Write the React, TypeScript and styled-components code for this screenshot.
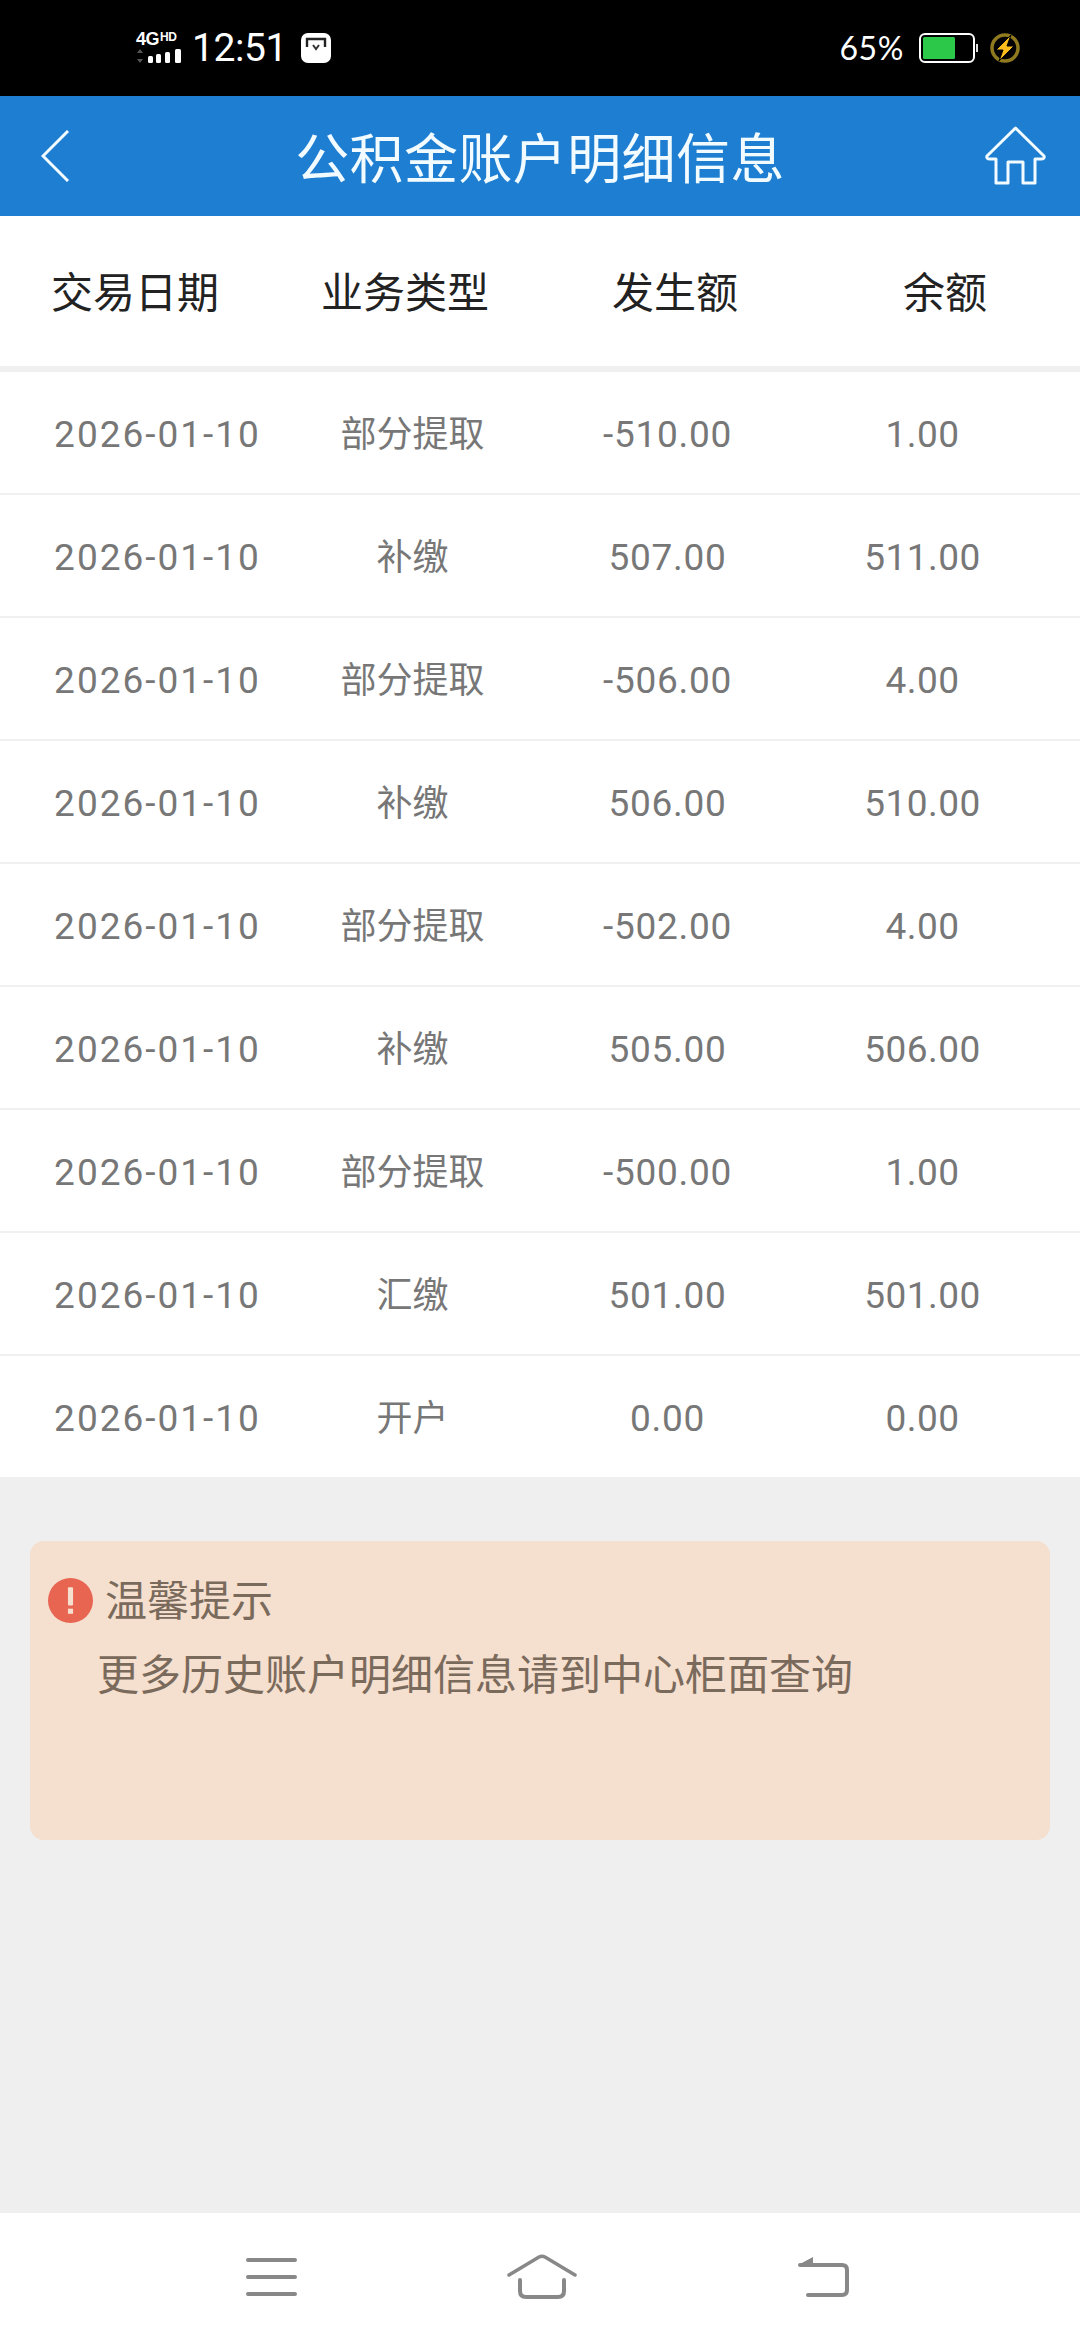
import React from 'react';
import styled, { createGlobalStyle } from 'styled-components';

const GlobalStyle = createGlobalStyle`
  html, body {
    margin: 0;
    padding: 0;
    background: #efefef;
  }
  * {
    box-sizing: border-box;
  }
`;

const Page = styled.div`
  width: 1080px;
  height: 2340px;
  display: flex;
  flex-direction: column;
  font-family: Roboto, "Noto Sans CJK SC", sans-serif;
  overflow: hidden;
`;

const StatusBar = styled.div`
  height: 96px;
  flex: none;
  background: #000;
  color: #fff;
  display: flex;
  align-items: center;
  justify-content: space-between;
  padding: 0 60px 0 136px;
`;

const StatusGroup = styled.div`
  display: flex;
  align-items: center;
`;

const SignalBox = styled.div`
  width: 46px;
  height: 32px;
  display: flex;
  flex-direction: column;
  justify-content: space-between;
  margin-right: 10px;
`;

const NetworkLabel = styled.div`
  display: flex;
  align-items: flex-start;
  height: 14px;
  font-family: "Liberation Sans", sans-serif;
  font-weight: 700;
  font-size: 18px;
  line-height: 14px;
  letter-spacing: -0.5px;
`;

const NetworkSup = styled.span`
  font-size: 12px;
  line-height: 10px;
  margin-left: 1px;
`;

const Clock = styled.span`
  font-size: 39px;
  line-height: 40px;
  letter-spacing: -0.4px;
  margin-right: 14px;
`;

const Percent = styled.span`
  font-size: 32px;
  line-height: 36px;
  letter-spacing: 0.6px;
  margin-right: 15px;
  font-family: Lato, sans-serif;
`;

const NavBar = styled.header`
  height: 120px;
  flex: none;
  background: #1e7fd2;
  color: #f2fbff;
  display: grid;
  grid-template-columns: 1fr auto 1fr;
  align-items: center;
  padding: 0 34px;
`;

const NavTitle = styled.h1`
  margin: 0;
  font-family: "Noto Sans CJK SC", sans-serif;
  font-size: 54px;
  line-height: 70px;
  font-weight: 400;
  letter-spacing: 0.4px;
`;

const NavSlot = styled.div<{ $end?: boolean }>`
  display: flex;
  justify-content: ${(p) => (p.$end ? 'flex-end' : 'flex-start')};
  padding-left: ${(p) => (p.$end ? '0' : '7px')};
`;

const Main = styled.main`
  flex: 1;
  background: #efefef;
`;

const TableHead = styled.div`
  height: 156px;
  background: #fff;
  border-bottom: 6px solid #f0f0f0;
  display: grid;
  grid-template-columns: repeat(4, 270px);
  align-items: center;
  padding-bottom: 2px;
`;

const HeadCell = styled.div`
  text-align: center;
  font-family: "Noto Sans CJK SC", sans-serif;
  font-size: 42px;
  line-height: 50px;
  color: #222;
`;

const Row = styled.div`
  height: 123px;
  background: #fff;
  border-bottom: 2px solid #f0f0f0;
  padding: 4px 30px 0;
  display: grid;
  grid-template-columns: repeat(4, 255px);
  align-items: center;
  &:last-child {
    border-bottom: none;
    height: 120px;
  }
`;

const Cell = styled.div<{ $spacing: number; $size: number }>`
  text-align: center;
  font-size: ${(p) => p.$size}px;
  line-height: 44px;
  letter-spacing: ${(p) => p.$spacing}px;
  color: #777;
  font-weight: 400;
`;

const Notice = styled.section`
  margin: 62px 30px 0;
  height: 299px;
  padding: 34px 18px 0;
  border-radius: 14px;
  background: #f5dfce;
  color: #7a6a5c;
  font-family: "Noto Sans CJK SC", sans-serif;
`;

const NoticeHead = styled.div`
  display: flex;
  align-items: center;
  gap: 12px;
  height: 50px;
`;

const NoticeTitle = styled.span`
  font-size: 42px;
  line-height: 50px;
  margin-bottom: 4px;
`;

const NoticeText = styled.p`
  margin: 22px 0 0 49px;
  font-size: 42px;
  line-height: 50px;
`;

const BottomBar = styled.nav`
  height: 127px;
  flex: none;
  background: #fff;
  display: grid;
  grid-template-columns: 246px 51px 210px 70px 221px 52px;
  align-items: center;
`;

const Icon = styled.svg`
  display: block;
`;

const NavIconSlot = styled.div<{ $col: number }>`
  grid-column: ${(p) => p.$col};
  display: flex;
  justify-content: center;
`;

type Record = { date: string; kind: string; amount: string; balance: string };

const records: Record[] = [
  { date: '2026-01-10', kind: '部分提取', amount: '-510.00', balance: '1.00' },
  { date: '2026-01-10', kind: '补缴', amount: '507.00', balance: '511.00' },
  { date: '2026-01-10', kind: '部分提取', amount: '-506.00', balance: '4.00' },
  { date: '2026-01-10', kind: '补缴', amount: '506.00', balance: '510.00' },
  { date: '2026-01-10', kind: '部分提取', amount: '-502.00', balance: '4.00' },
  { date: '2026-01-10', kind: '补缴', amount: '505.00', balance: '506.00' },
  { date: '2026-01-10', kind: '部分提取', amount: '-500.00', balance: '1.00' },
  { date: '2026-01-10', kind: '汇缴', amount: '501.00', balance: '501.00' },
  { date: '2026-01-10', kind: '开户', amount: '0.00', balance: '0.00' },
];

const headers = ['交易日期', '业务类型', '发生额', '余额'];

function App() {
  return (
    <Page>
      <GlobalStyle />
      {/* Status bar */}
      <StatusBar>
        <StatusGroup>
          <SignalBox>
            <NetworkLabel>
              4G<NetworkSup>HD</NetworkSup>
            </NetworkLabel>
            <Icon width="46" height="16" viewBox="0 0 46 16">
              <path d="M4 1 L7 5 H1 Z M4 15 L7 11 H1 Z" fill="#555" />
              <rect x="12" y="8" width="5" height="7" rx="1.5" fill="#fff" />
              <rect x="20" y="6" width="5" height="9" rx="1.5" fill="#fff" />
              <rect x="29" y="4" width="5" height="11" rx="1.5" fill="#fff" />
              <rect x="39" y="1" width="6" height="14" rx="1.5" fill="#fff" />
            </Icon>
          </SignalBox>
          <Clock>12:51</Clock>
          <Icon width="30" height="30" viewBox="0 0 30 30">
            <rect width="30" height="30" rx="7" fill="#fff" />
            <path d="M6 14 V6 H24 V14" fill="none" stroke="#222" strokeWidth="2.4" />
            <path d="M12 12 L15 16 L18 12" fill="none" stroke="#333" strokeWidth="2" />
          </Icon>
        </StatusGroup>
        <StatusGroup>
          <Percent>65%</Percent>
          <Icon width="59" height="30" viewBox="0 0 59 30" style={{ marginRight: 12 }}>
            <rect x="1" y="1" width="54" height="28" rx="5" fill="none" stroke="#fff" strokeWidth="2" />
            <rect x="4" y="4" width="32" height="22" rx="1.5" fill="#2bc84a" />
            <rect x="57" y="11" width="2" height="8" fill="#ddd" />
          </Icon>
          <Icon width="30" height="30" viewBox="0 0 30 30">
            <circle cx="15" cy="15" r="13" fill="none" stroke="#8f7a20" strokeWidth="3.5" />
            <path d="M21 2 L6 17 H13 L9 28 L24 13 H17 Z" fill="#fbbd1c" stroke="#000" strokeWidth="1" />
          </Icon>
        </StatusGroup>
      </StatusBar>

      {/* Title bar */}
      <NavBar>
        <NavSlot>
          <Icon width="29" height="52" viewBox="0 0 29 52">
            <path d="M27 1 L2 26 L27 51" fill="none" stroke="#f2fbff" strokeWidth="3" />
          </Icon>
        </NavSlot>
        <NavTitle>公积金账户明细信息</NavTitle>
        <NavSlot $end>
          <Icon width="61" height="60" viewBox="0 0 61 60">
            <path
              d="M30.5 2 L59 30 Q60 33 56 33 H50 V57 H38 V36 H23 V57 H11 V33 H5 Q1 33 2 30 Z"
              fill="none"
              stroke="#f2fbff"
              strokeWidth="3"
              strokeLinejoin="round"
            />
          </Icon>
        </NavSlot>
      </NavBar>

      <Main>
        <TableHead>
          {headers.map((h) => (
            <HeadCell key={h}>{h}</HeadCell>
          ))}
        </TableHead>
        {records.map((r, i) => (
          <Row key={i}>
            <Cell $size={37} $spacing={2}>{r.date}</Cell>
            <Cell $size={36} $spacing={0}>{r.kind}</Cell>
            <Cell $size={37} $spacing={0.7}>{r.amount}</Cell>
            <Cell $size={37} $spacing={0.5}>{r.balance}</Cell>
          </Row>
        ))}

        {/* Tips */}
        <Notice>
          <NoticeHead>
            <Icon width="45" height="45" viewBox="0 0 44 44">
              <circle cx="22" cy="22" r="22" fill="#e86552" />
              <rect x="19.5" y="9" width="5" height="18" rx="1" fill="#f5dfce" />
              <rect x="19.5" y="30" width="5" height="5" fill="#f5dfce" />
            </Icon>
            <NoticeTitle>温馨提示</NoticeTitle>
          </NoticeHead>
          <NoticeText>更多历史账户明细信息请到中心柜面查询</NoticeText>
        </Notice>
      </Main>

      {/* Phone navigation keys */}
      <BottomBar>
        <NavIconSlot $col={2}>
          <Icon width="51" height="38" viewBox="0 0 51 38">
            <path d="M2 2 H49 M2 19 H49 M2 36 H49" stroke="#888" strokeWidth="4" strokeLinecap="round" />
          </Icon>
        </NavIconSlot>
        <NavIconSlot $col={4}>
          <Icon width="70" height="46" viewBox="0 0 70 46">
            <path d="M2 21 L32 3 Q35 1.5 38 3 L68 21" fill="none" stroke="#888" strokeWidth="3.5" strokeLinecap="round" />
            <path d="M13 26 V37 Q13 43 19 43 H51 Q57 43 57 37 V26" fill="none" stroke="#888" strokeWidth="4" strokeLinecap="round" />
          </Icon>
        </NavIconSlot>
        <NavIconSlot $col={6}>
          <Icon width="52" height="42" viewBox="0 0 52 42">
            <path d="M0 9 L15 1 V9 Z" fill="#888" />
            <path d="M2 9 H44 Q49 9 49 14 V34 Q49 39 44 39 H10" fill="none" stroke="#888" strokeWidth="4" strokeLinecap="round" />
          </Icon>
        </NavIconSlot>
      </BottomBar>
    </Page>
  );
}

export default App;
